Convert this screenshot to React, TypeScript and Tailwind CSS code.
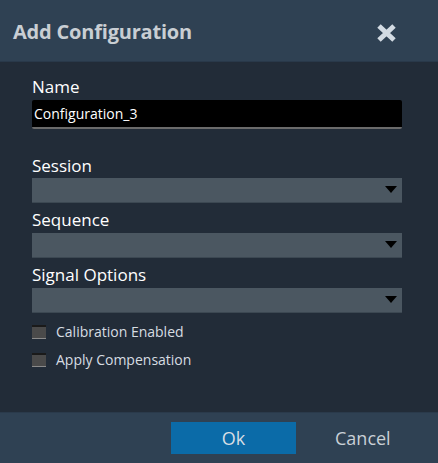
import React from "react";

function Select() {
  return (
    <div className="relative h-[25px] w-[370px] bg-[#4b5761] border-b border-[#3c4852]">
      <svg className="absolute right-[5px] top-[8px]" width="12" height="7" viewBox="0 0 12 7">
        <polygon points="0,0 12,0 6,7" fill="#000" />
      </svg>
    </div>
  );
}

function Check({ label }: { label: string }) {
  return (
    <div className="flex items-center h-[14px]">
      <div className="w-[14px] h-[14px] bg-[#4a4a4a] border-t-2 border-t-[#1a1a1a] border-b border-b-[#8a8a8a]" />
      <span className="ml-[10px] text-[14px] leading-none text-[#d7dde2]">{label}</span>
    </div>
  );
}

export default function App() {
  return (
    <div
      className="w-[438px] h-[463px] flex flex-col bg-[#222c38] overflow-hidden"
      style={{ fontFamily: '"Open Sans", "Noto Sans", sans-serif' }}
    >
      <div className="h-[62px] shrink-0 bg-[#2f4153] flex items-center justify-between pl-[13px] pr-[41px] border-b border-[#29394a]">
        <span className="text-[20px] leading-[24px] font-bold text-[#c9ced3] tracking-[-0.2px] mt-[2px]">Add Configuration</span>
        <svg width="21" height="20" viewBox="0 0 21 20" className="mt-[4px]">
          <path d="M3 3 L18 17 M18 3 L3 17" stroke="#d3dbe3" strokeWidth="5" strokeLinecap="butt" />
        </svg>
      </div>
      <div className="flex-1 flex flex-col pl-[32px]">
        <div className="mt-[15px] text-[17px] leading-[20px] text-white">Name</div>
        <div className="mt-[3px] h-[29px] w-[370px] bg-black border-b-2 border-[#6b6b6b] rounded-[2px] flex items-center pl-[2px]">
          <span className="text-[14px] text-white">Configuration_3</span>
        </div>
        <div className="mt-[27px] text-[17px] leading-[20px] text-white">Session</div>
        <div className="mt-[2px]"><Select /></div>
        <div className="mt-[7px] text-[17px] leading-[20px] text-white">Sequence</div>
        <div className="mt-[3px]"><Select /></div>
        <div className="mt-[7px] text-[17px] leading-[20px] text-white">Signal Options</div>
        <div className="mt-[3px]"><Select /></div>
        <div className="mt-[12px]"><Check label="Calibration Enabled" /></div>
        <div className="mt-[14px]"><Check label="Apply Compensation" /></div>
      </div>
      <div className="h-[51px] shrink-0 bg-[#2f4153] flex items-center border-t border-[#2a3a4b]">
        <div className="ml-[171px] w-[125px] h-[32px] bg-[#0b6ba8] flex items-center justify-center text-[18px] text-[#d6dde4]">
          Ok
        </div>
        <div className="ml-[39px] text-[18px] text-[#c9d0d6]">Cancel</div>
      </div>
    </div>
  );
}
